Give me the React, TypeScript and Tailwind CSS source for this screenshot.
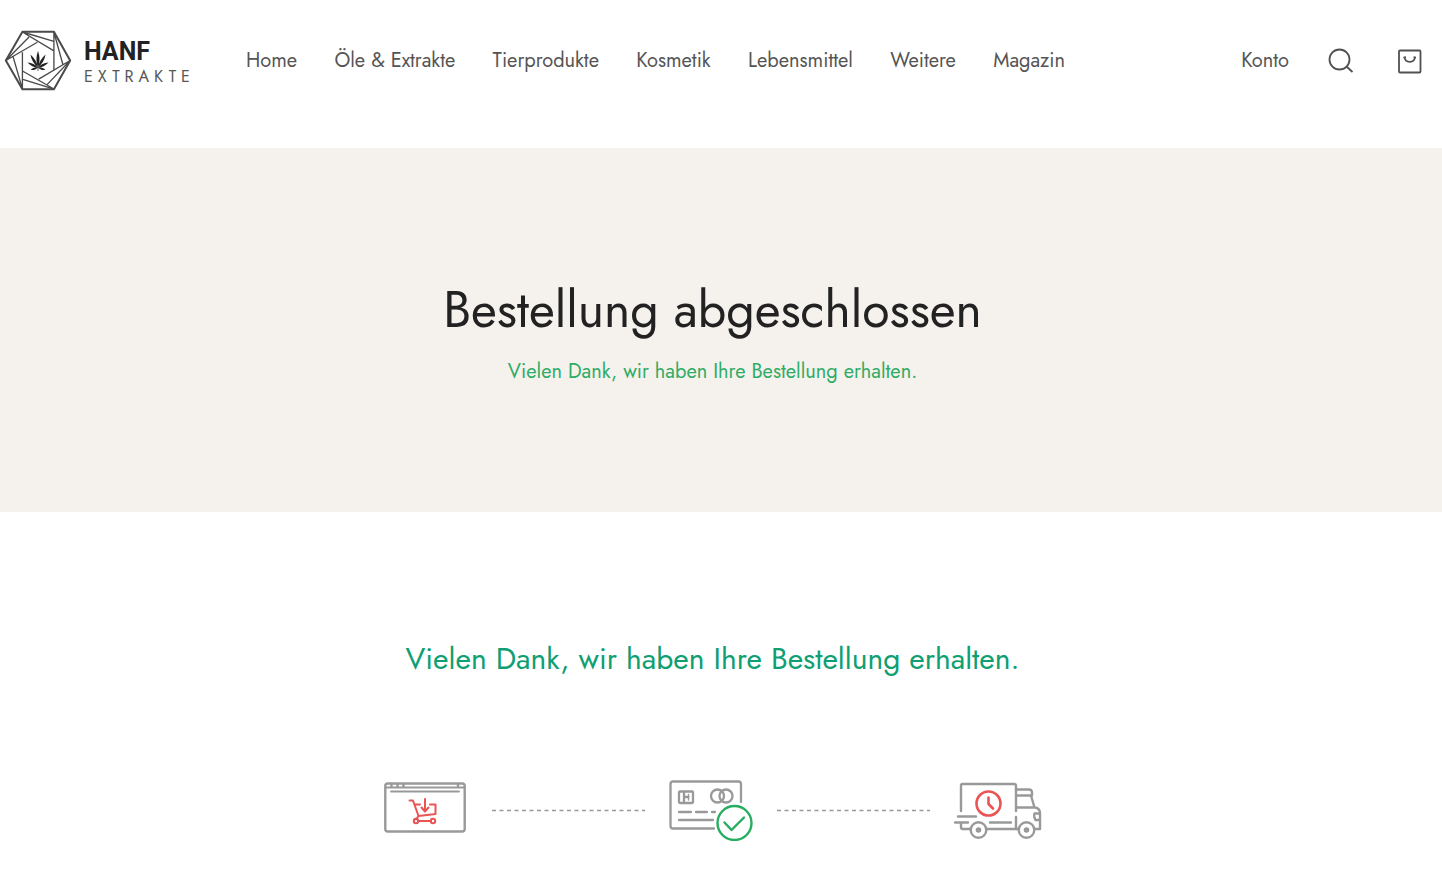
import React from "react";

const navItems = ["Home", "Öle & Extrakte", "Tierprodukte", "Kosmetik", "Lebensmittel", "Weitere", "Magazin"];

function LogoMark() {
  return (
    <svg viewBox="0 0 204 184" className="h-[61px] w-[68px]" fill="none" stroke="#4a4a4a" strokeWidth="4" strokeLinejoin="round" aria-hidden="true">
      <path strokeWidth="6" d="M55 5H150L199 92L150 179H55L5 92Z" />
      <path d="M55 6L150 63M55 6L150 34M150 6V121M150 6L177 104M199 92L104 148M199 92L130 164M150 178L54 123M150 178L54 148M55 178V67M55 178L27 81M5 92L100 37M5 92L75 21" />
      <g fill="#222" stroke="none">
        <path d="M102 113C95 94 97 78 102 63C107 78 109 94 102 113Z" />
        <path d="M102 113C90 103 82 90 79 74C91 85 99 97 102 113Z" />
        <path d="M102 113C114 103 122 90 125 74C113 85 105 97 102 113Z" />
        <path d="M102 114C90 113 79 107 70 98C84 99 94 104 102 114Z" />
        <path d="M102 114C114 113 125 107 134 98C120 99 110 104 102 114Z" />
        <path d="M102 113C94 120 87 122 80 120C86 114 94 111 102 113Z" />
        <path d="M102 113C110 120 117 122 124 120C118 114 110 111 102 113Z" />
        <path d="M101 112H103V124H101Z" />
      </g>
    </svg>
  );
}

function CartWindowIcon() {
  return (
    <svg viewBox="0 0 82 51" className="h-[51px] w-[82px]" fill="none" strokeLinecap="round" strokeLinejoin="round" aria-hidden="true">
      <g stroke="#999" strokeWidth="2.4">
        <rect x="1.3" y="1.5" width="79.4" height="48" rx="2.5" />
        <path d="M2 5.5H80M7 9.5H75" strokeWidth="1.8" />
        <path d="M7.5 2V5M13.5 2V5M19.5 2V5M74 2V5" strokeLinecap="butt" />
      </g>
      <g stroke="#ea5455" strokeWidth="2">
        <path d="M25.5 18.5H29L34.500 34L51.500 32V22.500H46M31 22.500H36" />
        <path d="M34.500 34L32 37.500M34 39H47M41 17V29M37.500 25.500L41 29.500L44.500 25.500" />
        <circle cx="32" cy="39" r="2.2" />
        <circle cx="49" cy="39" r="2.2" />
      </g>
    </svg>
  );
}

function PaymentIcon() {
  return (
    <svg viewBox="0 0 84 61" className="h-[61px] w-[84px]" fill="none" strokeLinecap="round" strokeLinejoin="round" aria-hidden="true">
      <g stroke="#999" strokeWidth="2.3">
        <path d="M72 22V4Q72 1.500 69.500 1.500H4Q1.500 1.500 1.500 4V46Q1.500 48.500 4 48.500H45" />
        <rect x="10" y="11.500" width="14" height="11.500" rx="1" />
        <path d="M15 12V23M15.500 17H19.500" />
        <path d="M19.500 14.500V20" strokeWidth="1.4" />
        <path d="M10 32H22M27 32H38M43 32H46M10 40H44" />
        <circle cx="48.500" cy="16" r="6.500" />
        <circle cx="57" cy="16" r="6.500" />
      </g>
      <g stroke="#25ae5f" strokeWidth="2.4">
        <circle cx="65.500" cy="43" r="19" fill="#fff" stroke="none" />
        <circle cx="65.500" cy="43" r="17" />
        <path d="M55.500 42.500L62.500 50L75 37.500" />
      </g>
    </svg>
  );
}

function DeliveryIcon() {
  return (
    <svg viewBox="1 0 88 58" className="h-[58px] w-[88px]" fill="none" strokeLinecap="round" strokeLinejoin="round" aria-hidden="true">
      <g stroke="#999" strokeWidth="2.4">
        <path d="M8 29V3.500Q8 2 9.500 2H61Q63 2 63 4V29M63 35V46.500M5 34.500H23M2 40.500H15M37 40.500H58M8 41V45Q8 47 10 47H17.500M33.500 47H65.500" />
        <path d="M63 7.500H76Q78.500 7.500 79 10V13.500H64M78 13.500L81.500 25.500M64 25.500H82Q87 26.500 87 31V47H82M86.500 31.500H81.500Q80.500 35 82.500 38H86.500" />
        <circle cx="25.500" cy="48" r="7.8" />
        <circle cx="73.500" cy="48" r="7.8" />
      </g>
      <circle cx="25.500" cy="48" r="2.8" fill="#999" />
      <circle cx="73.500" cy="48" r="2.8" fill="#999" />
      <g stroke="#ea5455" strokeWidth="2.6">
        <circle cx="35.500" cy="21.500" r="12" />
        <path d="M35.500 15.500V22L40 26.500" />
      </g>
    </svg>
  );
}

function Connector() {
  return (
    <svg className="mt-[29px] h-[3px] w-[153px]" aria-hidden="true">
      <path d="M0 1.5H153" stroke="#999" strokeWidth="1.3" strokeDasharray="4 3.5" />
    </svg>
  );
}

export default function App() {
  return (
    <div className="min-h-screen bg-white font-['Jost','Lato',sans-serif] text-[#555]">
      <header className="flex h-[148px] items-start pt-[30px] pr-[18px] pl-1">
        <a href="#" className="flex w-[242px] shrink-0 items-center" aria-label="Hanf Extrakte">
          <LogoMark />
          <span className="ml-3 flex flex-col pt-1">
            <span className="font-['Roboto',sans-serif] text-[25px] leading-7 font-bold text-[#222]">HANF</span>
            <span className="text-[16px] leading-[22px] tracking-[5px] text-[#555]">EXTRAKTE</span>
          </span>
        </a>
        <nav className="flex h-[61px] w-full max-w-[819px] items-center justify-between text-[20px] leading-7">
          {navItems.map((item) => (
            <a key={item} href="#" className="whitespace-nowrap">
              {item}
            </a>
          ))}
        </nav>
        <div className="ml-auto flex h-[61px] shrink-0 items-center pl-8">
          <a href="#" className="text-[20px] leading-7">
            Konto
          </a>
          <button type="button" aria-label="Suche" className="ml-[38px]">
            <svg viewBox="0 0 28 28" className="size-7" fill="none" stroke="#505050" strokeWidth="1.8" aria-hidden="true">
              <circle cx="12.500" cy="12.500" r="10" />
              <path d="M19.500 19.500L25.500 25" />
            </svg>
          </button>
          <button type="button" aria-label="Warenkorb" className="ml-[41px]">
            <svg viewBox="0 0 28 28" className="size-7" fill="none" stroke="#505050" strokeWidth="1.8" aria-hidden="true">
              <rect x="3" y="3.500" width="21.500" height="22" rx="1" />
              <path d="M8.500 10C9 16.500 18.500 16.500 19 10" />
              <path d="M7.500 10.500L10 10M17.500 10L20 10.500" strokeWidth="1.5" />
            </svg>
          </button>
        </div>
      </header>

      <section className="bg-[#f5f1ec] pt-[126px] pr-[17px] pb-[124px] text-center">
        <h1 className="text-[50px] leading-[72px] text-[#222]">Bestellung abgeschlossen</h1>
        <p className="mt-[10px] text-[20px] leading-8 text-[#2fac66]">Vielen Dank, wir haben Ihre Bestellung erhalten.</p>
      </section>

      <main className="pt-[123px] pr-[17px]">
        <h2 className="text-center text-[30px] leading-12 text-[#0f9f73]">Vielen Dank, wir haben Ihre Bestellung erhalten.</h2>
        <div className="mt-[97px] flex items-start justify-center gap-6">
          <div className="w-[84px] pt-[2px]">
            <CartWindowIcon />
          </div>
          <Connector />
          <PaymentIcon />
          <Connector />
          <div className="pt-[2px]">
            <DeliveryIcon />
          </div>
        </div>
      </main>
    </div>
  );
}
